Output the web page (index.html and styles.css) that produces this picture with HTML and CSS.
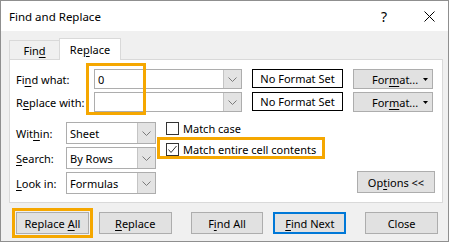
FILE: index.html
```html
<!DOCTYPE html>
<html lang="en">
<head>
    <meta charset="UTF-8">
    <title>Find and Replace</title>
    <link rel="stylesheet" href="styles.css">
</head>
<body>

<div class="window">
    <div class="titlebar">
        <span class="title">Find and Replace</span>
        <span class="help">?</span>
        <span class="close">
            <svg width="11" height="11" viewBox="0 0 11 11"><path d="M0.5 0.5 L10.5 10.5 M10.5 0.5 L0.5 10.5" stroke="#000" stroke-width="1" fill="none"/></svg>
        </span>
    </div>

    <div class="client">
        <div class="tabs">
            <div class="tab">Fin<u>d</u></div>
            <div class="tab active">Re<u>p</u>lace</div>
        </div>

        <div class="panel">
            <div class="find-grid">
                <label>Fi<u>n</u>d what:</label>
                <div class="combo">
                    <span class="combo-text">0</span>
                    <span class="combo-drop"><svg width="9" height="5" viewBox="0 0 9 5"><polyline points="0.5,0.5 4.5,4.5 8.5,0.5" fill="none" stroke="#7a7a7a" stroke-width="1"/></svg></span>
                </div>
                <div class="format-box">No Format Set</div>
                <button class="btn fmt-btn">For<u>m</u>at...<svg class="caret" width="5" height="3" viewBox="0 0 5 3"><polygon points="0,0 5,0 2.5,3" fill="#000"/></svg></button>

                <label>R<u>e</u>place with:</label>
                <div class="combo">
                    <span class="combo-text"></span>
                    <span class="combo-drop"><svg width="9" height="5" viewBox="0 0 9 5"><polyline points="0.5,0.5 4.5,4.5 8.5,0.5" fill="none" stroke="#7a7a7a" stroke-width="1"/></svg></span>
                </div>
                <div class="format-box">No Format Set</div>
                <button class="btn fmt-btn">For<u>m</u>at...<svg class="caret" width="5" height="3" viewBox="0 0 5 3"><polygon points="0,0 5,0 2.5,3" fill="#000"/></svg></button>
            </div>

            <div class="scope-grid">
                <div class="checks">
                    <div class="check">
                        <span class="box"></span>
                        <span>Match case</span>
                    </div>
                    <div class="check">
                        <span class="box"><svg width="11" height="11" viewBox="0 0 11 11"><polyline points="1.5,5.5 4,8.5 9.5,2" fill="none" stroke="#333" stroke-width="1"/></svg></span>
                        <span>Match entire cell co<u>n</u>tents</span>
                    </div>
                </div>

                <label>Wit<u>h</u>in:</label>
                <div class="combo">
                    <span class="combo-text">Sheet</span>
                    <span class="combo-drop"><svg width="9" height="5" viewBox="0 0 9 5"><polyline points="0.5,0.5 4.5,4.5 8.5,0.5" fill="none" stroke="#7a7a7a" stroke-width="1"/></svg></span>
                </div>

                <label><u>S</u>earch:</label>
                <div class="combo">
                    <span class="combo-text">By Rows</span>
                    <span class="combo-drop"><svg width="9" height="5" viewBox="0 0 9 5"><polyline points="0.5,0.5 4.5,4.5 8.5,0.5" fill="none" stroke="#7a7a7a" stroke-width="1"/></svg></span>
                </div>

                <label><u>L</u>ook in:</label>
                <div class="combo">
                    <span class="combo-text">Formulas</span>
                    <span class="combo-drop"><svg width="9" height="5" viewBox="0 0 9 5"><polyline points="0.5,0.5 4.5,4.5 8.5,0.5" fill="none" stroke="#7a7a7a" stroke-width="1"/></svg></span>
                </div>

                <button class="btn options-btn">Op<u>t</u>ions &lt;&lt;</button>
            </div>
        </div>

        <div class="actions">
            <button class="btn marked">Replace <u>A</u>ll</button>
            <button class="btn"><u>R</u>eplace</button>
            <button class="btn wide-gap">F<u>i</u>nd All</button>
            <button class="btn default"><u>F</u>ind Next</button>
            <button class="btn wide-gap">Close</button>
        </div>
    </div>

    <!-- highlight boxes drawn over the dialog -->
    <div class="mark mark-inputs"></div>
    <div class="mark mark-check"></div>
</div>

</body>
</html>
```

FILE: styles.css
```css
body {
    margin: 0;
    background-color: #fff;
    font-family: "Noto Sans", "Segoe UI", sans-serif;
    font-size: 11px;
    color: #000;
}
u {
    text-decoration-thickness: 1px;
    text-underline-offset: 2px;
}
label {
    white-space: nowrap;
}
.window {
    position: relative;
    width: 447px;
    height: 240px;
    border: 1px solid #8f8f8f;
    background-color: #f0f0f0;
}
.titlebar {
    height: 30px;
    background-color: #fff;
    display: flex;
    align-items: center;
    padding-left: 8px;
    font-size: 11.5px;
}
.title {
    flex: 1;
}
.help {
    width: 20px;
    text-align: center;
    font-size: 14px;
    margin-right: 25px;
}
.close {
    width: 20px;
    display: flex;
    justify-content: center;
    margin-right: 9px;
}
.client {
    padding: 7px 0 0 8px;
}
.tabs {
    display: flex;
    align-items: flex-end;
    height: 21px;
}
.tab {
    width: 49px;
    height: 18px;
    border: 1px solid #d9d9d9;
    border-bottom: none;
    display: flex;
    align-items: center;
    justify-content: center;
}
.tab.active {
    width: 60px;
    height: 21px;
    margin-left: -1px;
    margin-bottom: -1px;
    background-color: #fff;
    position: relative;
    z-index: 1;
}
.panel {
    width: 419px;
    background-color: #fff;
    border: 1px solid #d9d9d9;
    padding: 9px 7px 8px 6px;
}
.find-grid {
    display: grid;
    grid-template-columns: 68px 148px 91px 80px;
    grid-auto-rows: 20px;
    column-gap: 10px;
    row-gap: 3px;
    align-items: center;
}
.scope-grid {
    display: grid;
    grid-template-columns: 50px 90px 1fr auto;
    grid-template-rows: repeat(3, 22px);
    row-gap: 3px;
    margin-top: 10px;
    align-items: center;
}
.scope-grid label {
    grid-column: 1;
}
.scope-grid .combo {
    grid-column: 2;
}
.combo {
    display: flex;
    height: 100%;
    box-sizing: border-box;
    border: 1px solid #adadad;
    background-color: #fff;
}
.combo-text {
    flex: 1;
    padding-left: 3px;
    align-self: center;
}
.combo-drop {
    width: 17px;
    background-color: #e3e3e3;
    border-left: 1px solid #c4c4c4;
    display: flex;
    align-items: center;
    justify-content: center;
}
.format-box {
    height: 19px;
    align-self: start;
    box-sizing: border-box;
    border: 1px solid #000;
    display: flex;
    align-items: center;
    justify-content: center;
}
.btn {
    height: 22px;
    width: 74px;
    box-sizing: border-box;
    border: 1px solid #adadad;
    background-color: #e1e1e1;
    font: inherit;
    color: #000;
    padding: 0;
}
.fmt-btn {
    width: 80px;
    height: 20px;
    display: flex;
    align-items: center;
    padding-left: 18px;
}
.caret {
    margin-left: auto;
    margin-right: 4px;
}
.checks {
    grid-column: 3;
    grid-row: 1 / 3;
    align-self: start;
    margin-left: 10px;
}
.check {
    display: flex;
    align-items: center;
    height: 13px;
    margin-bottom: 8px;
}
.box {
    width: 13px;
    height: 13px;
    box-sizing: border-box;
    border: 1px solid #333;
    background-color: #fff;
    margin-right: 4px;
    display: flex;
}
.options-btn {
    grid-column: 4;
    grid-row: 3;
    width: 78px;
    margin-top: -2px;
}
.actions {
    display: flex;
    margin-top: 9px;
    padding-left: 7px;
}
.actions .btn {
    margin-right: 10px;
}
.actions .wide-gap {
    margin-left: 9px;
}
.btn.default {
    border: 2px solid #0078d7;
}
.btn.marked {
    outline: 3px solid #f5a700;
    outline-offset: 1px;
}
.mark {
    position: absolute;
    box-sizing: border-box;
    border: 3px solid #f5a700;
}
.mark-inputs {
    left: 85px;
    top: 62px;
    width: 60px;
    height: 52px;
}
.mark-check {
    left: 156px;
    top: 136px;
    width: 168px;
    height: 22px;
}
```
